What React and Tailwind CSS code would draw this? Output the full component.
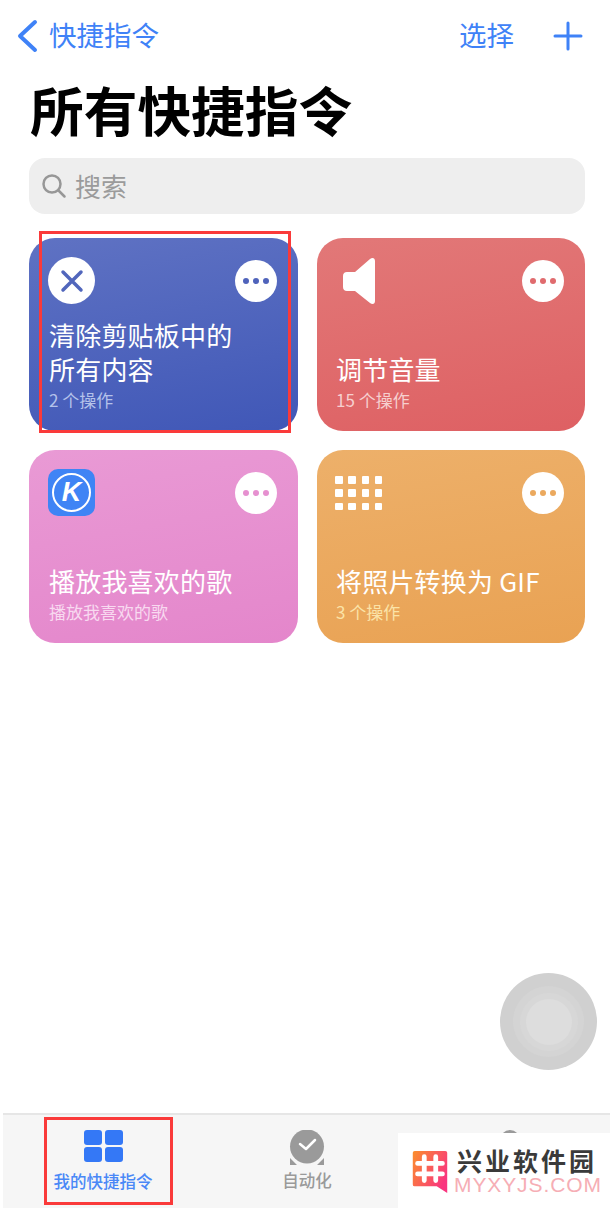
const cards = [
  { title: ["清除剪贴板中的", "所有内容"], sub: "2 个操作", bg: "from-[#5f72c3] to-[#4057b7]", dots: "bg-[#4f63bb]", subColor: "text-[#b4c2ea]", icon: "clear", inset: "pl-[20px]" },
  { title: ["调节音量"], sub: "15 个操作", bg: "from-[#e27878] to-[#de6063]", dots: "bg-[#e06b6e]", subColor: "text-[#f6cfcf]", icon: "speaker", inset: "pl-[19px]" },
  { title: ["播放我喜欢的歌"], sub: "播放我喜欢的歌", bg: "from-[#e99ad5] to-[#e486cb]", dots: "bg-[#e690d0]", subColor: "text-[#f8d9f0]", icon: "kugou", inset: "pl-[20px]" },
  { title: ["将照片转换为 GIF"], sub: "3 个操作", bg: "from-[#edb06a] to-[#e9a253]", dots: "bg-[#eba95e]", subColor: "text-[#fbe3a8]", icon: "grid", inset: "pl-[19px]" },
];

function CardIcon({ type }) {
  if (type === "clear") {
    return (
      <div className="-ml-[1px] flex h-[47px] w-[47px] items-center justify-center rounded-full bg-white">
        <svg width="24" height="24" viewBox="0 0 24 24" fill="none" stroke="#5166bc" strokeWidth="3.500" strokeLinecap="round">
          <path d="M3 3 21 21M21 3 3 21" />
        </svg>
      </div>
    );
  }
  if (type === "speaker") {
    return (
      <svg width="32" height="48" viewBox="0 0 32 48" fill="white" className="ml-[7px]">
        <path d="M4 15h8L27 2c2.500-2 5-1 5 2v40c0 3-2.500 4-5 2L12 34H4c-2.500 0-4-1.500-4-4V19c0-2.500 1.500-4 4-4Z" />
      </svg>
    );
  }
  if (type === "kugou") {
    return (
      <div className="-ml-[1px] flex h-[47px] w-[47px] items-center justify-center rounded-[10px] bg-[#3f84f5]">
        <div className="flex h-[39px] w-[39px] items-center justify-center rounded-full border-[2px] border-white">
          <span className="text-[27px] leading-none font-bold text-white italic [font-family:'Liberation_Sans',sans-serif]">K</span>
        </div>
      </div>
    );
  }
  return (
    <div className="-ml-[1px] grid grid-cols-4 gap-x-[5.800px] gap-y-[5.800px] pt-[7px]">
      {Array.from({ length: 12 }, (_, i) => (
        <div key={i} className="h-[7.500px] w-[7.500px] rounded-[1px] bg-white" />
      ))}
    </div>
  );
}

function Card({ card }) {
  return (
    <div className={`flex h-[193px] flex-col justify-between rounded-[26px] bg-linear-170 ${card.bg} ${card.inset} pt-[19px] pr-[21px] pb-[19px]`}>
      <div className="flex items-start justify-between">
        <CardIcon type={card.icon} />
        <div className="mt-[3px] flex h-[42px] w-[42px] items-center justify-center gap-[4px] rounded-full bg-white">
          <span className={`h-[6px] w-[6px] rounded-full ${card.dots}`} />
          <span className={`h-[6px] w-[6px] rounded-full ${card.dots}`} />
          <span className={`h-[6px] w-[6px] rounded-full ${card.dots}`} />
        </div>
      </div>
      <div>
        {card.title.map((line) => (
          <div key={line} className="text-[26px] leading-[34px] tracking-[0.2px] whitespace-nowrap text-white">{line}</div>
        ))}
        <div className={`mt-[2px] text-[17px] leading-[24px] whitespace-nowrap ${card.subColor}`}>{card.sub}</div>
      </div>
    </div>
  );
}

export default function App() {
  return (
    <div className="relative flex h-[1208px] w-[614px] flex-col overflow-hidden bg-white [font-family:'Noto_Sans_CJK_SC','Liberation_Sans',sans-serif]">
      <div className="flex h-[72px] items-center justify-between pr-[31px] pl-[17px] text-[27.500px] text-[#3f82f7]">
        <div className="flex items-center gap-[11px]">
          <svg width="21" height="34" viewBox="0 0 21 34" fill="none" stroke="#3f82f7" strokeWidth="4" strokeLinecap="round" strokeLinejoin="round">
            <path d="M18 3 3 17l15 14" />
          </svg>
          <span className="pb-[3px] leading-none">快捷指令</span>
        </div>
        <div className="flex items-center gap-[39px]">
          <span className="pb-[3px] leading-none">选择</span>
          <svg width="30" height="30" viewBox="0 0 30 30" stroke="#3f82f7" strokeWidth="3" strokeLinecap="round">
            <path d="M15 2v26M2 15h26" />
          </svg>
        </div>
      </div>

      <h1 className="h-[86px] pl-[30px] text-[53.700px] leading-[74px] font-bold whitespace-nowrap text-black">所有快捷指令</h1>

      <div className="mx-[29px] flex h-[56px] w-[556px] items-center gap-[8px] rounded-[16px] bg-[#eeeeee] pl-[12px] text-[26px] text-[#9b9b9b]">
        <svg width="26" height="26" viewBox="0 0 26 26" fill="none" stroke="#979797" strokeWidth="2.500" strokeLinecap="round">
          <circle cx="11" cy="11" r="8.500" />
          <path d="m17.500 17.500 6 6" />
        </svg>
        <span className="leading-none">搜索</span>
      </div>

      <div className="mt-[24px] ml-[29px] grid w-[556px] grid-cols-[269px_268px] gap-x-[19px] gap-y-[19px]">
        {cards.map((card) => (
          <Card key={card.sub + card.title[0]} card={card} />
        ))}
      </div>

      <div className="flex-1" />

      <div className="ml-[3px] flex h-[95px] w-[607px] border-t-2 border-[#e6e6e6] bg-[#f6f6f6]">
        <div className="flex w-[202px] flex-col items-center pt-[15px] pr-[2px]">
          <div className="grid grid-cols-2 gap-x-[3px] gap-y-[2px]">
            <span className="h-[15px] w-[18px] rounded-[3px] bg-[#3478f6]" />
            <span className="h-[15px] w-[18px] rounded-[3px] bg-[#3478f6]" />
            <span className="h-[15px] w-[18px] rounded-[3px] bg-[#3478f6]" />
            <span className="h-[15px] w-[18px] rounded-[3px] bg-[#3478f6]" />
          </div>
          <span className="mt-[7px] text-[16.500px] leading-[24px] font-medium whitespace-nowrap text-[#4a88f7]">我的快捷指令</span>
        </div>
        <div className="flex w-[202px] flex-col items-center pt-[15px] pl-[2px]">
          <svg width="36" height="36" viewBox="0 0 36 36">
            <path d="M1 28 8 35H1ZM35 28l-7 7h7Z" fill="#9a9a9a" />
            <circle cx="18" cy="16.500" r="17" fill="#9a9a9a" />
            <path d="m11 14 6 5 9-9" fill="none" stroke="white" strokeWidth="2.500" strokeLinecap="round" strokeLinejoin="round" />
          </svg>
          <span className="mt-[2px] text-[16.500px] leading-[24px] font-medium whitespace-nowrap text-[#9a9a9a]">自动化</span>
        </div>
      </div>

      {/* floating assistive touch */}
      <div className="absolute top-[973px] left-[500px] flex h-[97px] w-[97px] items-center justify-center rounded-full bg-[#d0d0d0]">
        <div className="flex h-[71px] w-[71px] items-center justify-center rounded-full bg-[#d4d4d4]">
          <div className="flex h-[58px] w-[58px] items-center justify-center rounded-full bg-[#d7d7d7]">
            <div className="h-[46px] w-[46px] rounded-full bg-[#dddddd]" />
          </div>
        </div>
      </div>

      {/* red annotation boxes */}
      <div className="absolute top-[231px] left-[39px] h-[202px] w-[252px] border-[3px] border-[#fa3a3a]" />
      <div className="absolute top-[1117px] left-[44px] h-[88px] w-[129px] border-[3px] border-[#fa3a3a]" />

      {/* third tab peeking above the watermark */}
      <div className="absolute top-[1130px] left-[500px] h-[10px] w-[20px] rounded-t-full bg-[#9a9a9a]" />

      {/* watermark */}
      <div className="absolute top-[1133px] left-[398px] flex h-[75px] w-[216px] items-start bg-white pt-[14px] pl-[13px]">
        <svg width="38" height="44" viewBox="0 0 38 46" className="mt-[3px] shrink-0">
          <defs>
            <linearGradient id="wmLogo" x1="0" y1="0" x2="1" y2="0.6">
              <stop offset="0%" stopColor="#fb8f2c" />
              <stop offset="100%" stopColor="#f9357f" />
            </linearGradient>
          </defs>
          <path d="M3 1h32a2 2 0 0 1 2 2v42l-11-7H3a2 2 0 0 1-2-2V3a2 2 0 0 1 2-2Z" fill="url(#wmLogo)" />
          <path d="M13 7v25M25 7v25M6 14h26M6 25h26" stroke="white" strokeWidth="5" strokeLinecap="round" fill="none" />
        </svg>
        <div className="ml-[5px] flex flex-col">
          <span className="ml-[3px] text-[25px] leading-[27px] font-bold tracking-[3px] whitespace-nowrap text-[#3a3a3a]">兴业软件园</span>
          <span className="mt-[2px] text-[21px] leading-[18px] tracking-[0.9px] whitespace-nowrap text-[#f6aeb5] [font-family:'Liberation_Sans',sans-serif]">MYXYJS.COM</span>
        </div>
      </div>
    </div>
  );
}
